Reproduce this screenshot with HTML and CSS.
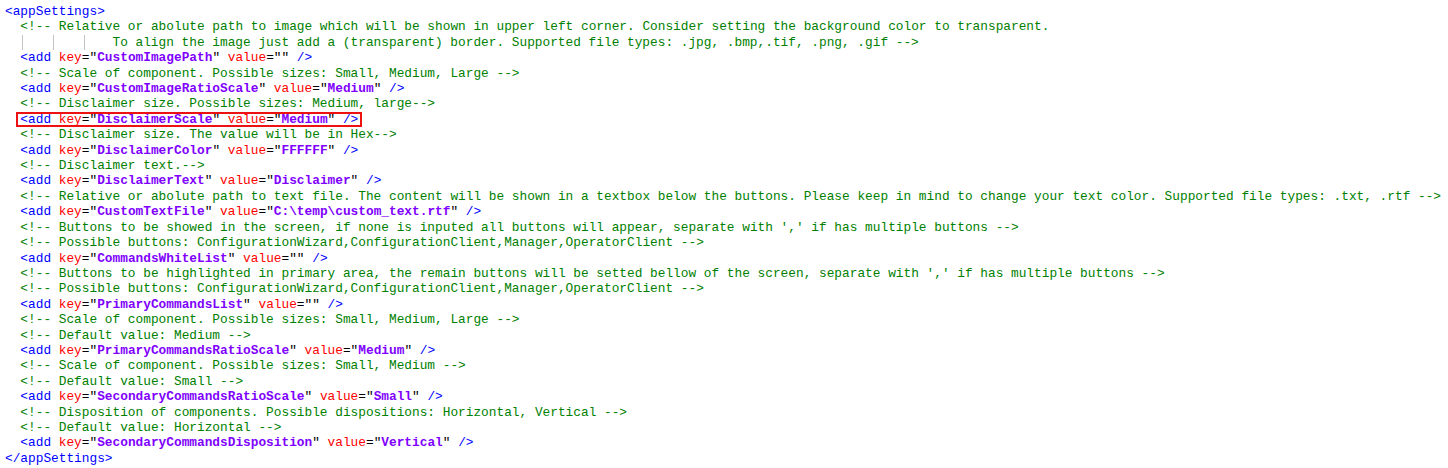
FILE: index.html
```html
<!DOCTYPE html>
<html>
<head>
<meta charset="utf-8">
<link rel="stylesheet" href="styles.css">
</head>
<body>
<div class="code">
<div class="l"><span class="t">&lt;appSettings&gt;</span></div>
<div class="l">  <span class="c">&lt;!-- Relative or abolute path to image which will be shown in upper left corner. Consider setting the background color to transparent.</span></div>
<div class="l">  <span class="tab"></span><span class="tab"></span><span class="tab"></span><span class="c">To align the image just add a (transparent) border. Supported file types: .jpg, .bmp,.tif, .png, .gif --&gt;</span></div>
<div class="l">  <span class="t">&lt;add</span> <span class="a">key</span>="<span class="v">CustomImagePath</span>" <span class="a">value</span>="" <span class="t">/&gt;</span></div>
<div class="l">  <span class="c">&lt;!-- Scale of component. Possible sizes: Small, Medium, Large --&gt;</span></div>
<div class="l">  <span class="t">&lt;add</span> <span class="a">key</span>="<span class="v">CustomImageRatioScale</span>" <span class="a">value</span>="<span class="v">Medium</span>" <span class="t">/&gt;</span></div>
<div class="l">  <span class="c">&lt;!-- Disclaimer size. Possible sizes: Medium, large--&gt;</span></div>
<div class="l">  <span class="hl"><span class="t">&lt;add</span> <span class="a">key</span>="<span class="v">DisclaimerScale</span>" <span class="a">value</span>="<span class="v">Medium</span>" <span class="t">/&gt;</span></span></div>
<div class="l">  <span class="c">&lt;!-- Disclaimer size. The value will be in Hex--&gt;</span></div>
<div class="l">  <span class="t">&lt;add</span> <span class="a">key</span>="<span class="v">DisclaimerColor</span>" <span class="a">value</span>="<span class="v">FFFFFF</span>" <span class="t">/&gt;</span></div>
<div class="l">  <span class="c">&lt;!-- Disclaimer text.--&gt;</span></div>
<div class="l">  <span class="t">&lt;add</span> <span class="a">key</span>="<span class="v">DisclaimerText</span>" <span class="a">value</span>="<span class="v">Disclaimer</span>" <span class="t">/&gt;</span></div>
<div class="l">  <span class="c">&lt;!-- Relative or abolute path to text file. The content will be shown in a textbox below the buttons. Please keep in mind to change your text color. Supported file types: .txt, .rtf --&gt;</span></div>
<div class="l">  <span class="t">&lt;add</span> <span class="a">key</span>="<span class="v">CustomTextFile</span>" <span class="a">value</span>="<span class="v">C:\temp\custom_text.rtf</span>" <span class="t">/&gt;</span></div>
<div class="l">  <span class="c">&lt;!-- Buttons to be showed in the screen, if none is inputed all buttons will appear, separate with ',' if has multiple buttons --&gt;</span></div>
<div class="l">  <span class="c">&lt;!-- Possible buttons: ConfigurationWizard,ConfigurationClient,Manager,OperatorClient --&gt;</span></div>
<div class="l">  <span class="t">&lt;add</span> <span class="a">key</span>="<span class="v">CommandsWhiteList</span>" <span class="a">value</span>="" <span class="t">/&gt;</span></div>
<div class="l">  <span class="c">&lt;!-- Buttons to be highlighted in primary area, the remain buttons will be setted bellow of the screen, separate with ',' if has multiple buttons --&gt;</span></div>
<div class="l">  <span class="c">&lt;!-- Possible buttons: ConfigurationWizard,ConfigurationClient,Manager,OperatorClient --&gt;</span></div>
<div class="l">  <span class="t">&lt;add</span> <span class="a">key</span>="<span class="v">PrimaryCommandsList</span>" <span class="a">value</span>="" <span class="t">/&gt;</span></div>
<div class="l">  <span class="c">&lt;!-- Scale of component. Possible sizes: Small, Medium, Large --&gt;</span></div>
<div class="l">  <span class="c">&lt;!-- Default value: Medium --&gt;</span></div>
<div class="l">  <span class="t">&lt;add</span> <span class="a">key</span>="<span class="v">PrimaryCommandsRatioScale</span>" <span class="a">value</span>="<span class="v">Medium</span>" <span class="t">/&gt;</span></div>
<div class="l">  <span class="c">&lt;!-- Scale of component. Possible sizes: Small, Medium --&gt;</span></div>
<div class="l">  <span class="c">&lt;!-- Default value: Small --&gt;</span></div>
<div class="l">  <span class="t">&lt;add</span> <span class="a">key</span>="<span class="v">SecondaryCommandsRatioScale</span>" <span class="a">value</span>="<span class="v">Small</span>" <span class="t">/&gt;</span></div>
<div class="l">  <span class="c">&lt;!-- Disposition of components. Possible dispositions: Horizontal, Vertical --&gt;</span></div>
<div class="l">  <span class="c">&lt;!-- Default value: Horizontal --&gt;</span></div>
<div class="l">  <span class="t">&lt;add</span> <span class="a">key</span>="<span class="v">SecondaryCommandsDisposition</span>" <span class="a">value</span>="<span class="v">Vertical</span>" <span class="t">/&gt;</span></div>
<div class="l"><span class="t">&lt;/appSettings&gt;</span></div>
</div>
</body>
</html>
```
FILE: styles.css
```css
html, body {
  margin: 0;
  padding: 0;
  background: #ffffff;
}
.code {
  padding: 4px 0 0 5px;
  font-family: "Liberation Mono", "Courier New", monospace;
  font-size: 12.8px;
  line-height: 15.41px;
  color: #000000;
}
.l {
  white-space: pre;
  height: 15.41px;
}
.t { color: #0000ff; }
.a { color: #ff0000; }
.v { color: #8000ff; font-weight: bold; }
.c { color: #008000; }
.tab {
  display: inline-block;
  width: 4ch;
  height: 15.41px;
  vertical-align: top;
  background: linear-gradient(#c4c4c4, #c4c4c4) 2px 0 / 1px 100% no-repeat;
}
.hl {
  display: inline-block;
  vertical-align: top;
  height: 15.41px;
  padding: 0 4px;
  margin-left: -4px;
  box-shadow: inset 0 0 0 2px #ee1111;
}
```
